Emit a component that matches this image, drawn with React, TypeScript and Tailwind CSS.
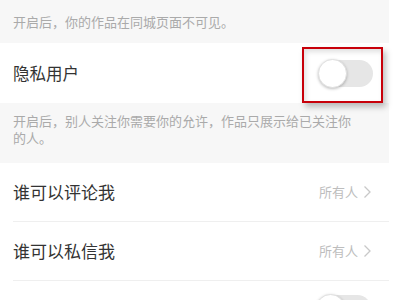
import React from "react";

const font = { fontFamily: '"Noto Sans CJK SC", "Noto Sans", sans-serif' };

function Toggle() {
  return (
    <div className="relative h-[27px] w-[54px] rounded-full bg-[#e6e6e6]">
      <div className="absolute left-[-1px] top-[-1px] h-[29px] w-[29px] rounded-full border border-[#e0e0e0] bg-white shadow-[0_1px_3px_rgba(0,0,0,0.25)]" />
    </div>
  );
}

function Chevron() {
  return (
    <svg width="9" height="14" viewBox="0 0 9 14" fill="none">
      <path d="M1.5 1.5 L7 7 L1.5 12.5" stroke="#c8c8c8" strokeWidth="1.3" />
    </svg>
  );
}

function LinkRow({ label, value, divider }: { label: string; value: string; divider?: boolean }) {
  return (
    <div className="pl-[13px]">
      <div className={`flex h-[59px] items-center justify-between pr-[17px] ${divider ? "border-b border-[#efefef]" : ""}`}>
        <span className="text-[17px] text-[#333]">{label}</span>
        <span className="flex items-center gap-[5px] text-[13px] text-[#bdbdbd]">
          {value}
          <Chevron />
        </span>
      </div>
    </div>
  );
}

export default function App() {
  return (
    <div className="h-[300px] w-[400px] overflow-hidden bg-white" style={font}>
      <div className="w-[389px]">
        {/* note */}
        <div className="flex h-[43px] items-center bg-[#f7f7f7] pl-[13px]">
          <p className="text-[13px] text-[#aaa]">开启后，你的作品在同城页面不可见。</p>
        </div>

        {/* private user */}
        <div className="relative flex h-[60px] items-center justify-between pl-[13px] pr-[16px]">
          <span className="text-[16.5px] text-[#333]">隐私用户</span>
          <Toggle />
          <div className="absolute left-[302px] top-[4px] h-[56px] w-[81px] border-2 border-[#c8000a] shadow-[3px_4px_6px_rgba(0,0,0,0.25),inset_2px_3px_5px_rgba(0,0,0,0.12)]" />
        </div>

        <div className="h-[60px] bg-[#f7f7f7] pl-[13px] pr-[20px] pt-[9px]">
          <p className="text-[13px] leading-[17px] text-[#aaa]">
            开启后，别人关注你需要你的允许，作品只展示给已关注你
            <br />
            的人。
          </p>
        </div>

        <LinkRow label="谁可以评论我" value="所有人" divider />
        <LinkRow label="谁可以私信我" value="所有人" divider />

        <div className="flex h-[60px] items-start justify-end pr-[18px] pt-[14px]">
          <Toggle />
        </div>
      </div>
    </div>
  );
}
